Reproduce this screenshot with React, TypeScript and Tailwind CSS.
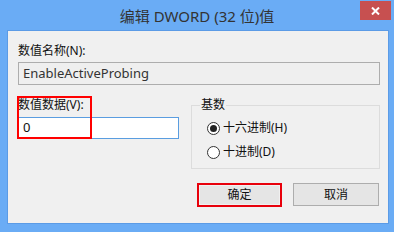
import React from 'react';

const font = { fontFamily: '"Noto Sans", "Noto Sans CJK SC", sans-serif' };

const Radio = ({ checked, label }: { checked?: boolean; label: string }) => (
  <div className="flex items-center h-[16px]">
    <span className="w-[13px] h-[13px] rounded-full border border-[#333] bg-white flex items-center justify-center">
      {checked && <span className="w-[7px] h-[7px] rounded-full bg-[#222]" />}
    </span>
    <span className="ml-[3px] text-[12px] leading-[16px] text-[#111]">{label}</span>
  </div>
);

export default function App() {
  return (
    <div
      className="w-[394px] h-[232px] bg-[#6aacf5] flex flex-col overflow-hidden"
      style={font}
    >
      {/* Title bar */}
      <div className="relative h-[30px] flex items-center justify-center">
        <span className="text-[15px] leading-[20px] text-[#333] pt-[1px]">编辑 DWORD (32 位)值</span>
        <div className="absolute right-[3px] top-[1px] w-[31px] h-[19px] bg-[#c75050] flex items-center justify-center">
          <svg width="9" height="8" viewBox="0 0 9 8">
            <path d="M1 0.5 L8 7.5 M8 0.5 L1 7.5" stroke="white" strokeWidth="2" />
          </svg>
        </div>
      </div>

      {/* Body */}
      <div className="flex-1 ml-[7px] mr-[5px] mb-[8px] bg-[#f0f0f0] border border-[#5b9be6] pl-[10px] pr-[8px] pt-[12px] flex flex-col">
        <div className="text-[12px] leading-[16px] text-[#111]">数值名称(N):</div>
        <div className="mt-[3px] h-[23px] border border-[#adadad] bg-[#efefef] flex items-center pl-[4px] text-[13px] text-[#333]">
          EnableActiveProbing
        </div>

        <div className="mt-[12px] flex">
          <div className="relative w-[161px] flex flex-col">
            <div className="text-[12px] leading-[16px] text-[#111]">数值数据(V):</div>
            <div className="mt-[4px] h-[22px] border border-[#5a9de0] bg-white flex items-center pl-[4px] text-[13px] text-[#111]">
              0
            </div>
            <div className="absolute left-[-1px] top-[-1px] w-[75px] h-[43px] border-2 border-[#ff0000]" />
          </div>

          <fieldset className="ml-[12px] w-[189px] h-[72px] border border-[#dcdcdc] pl-[15px]">
            <legend className="ml-[-7px] px-[1px] text-[12px] leading-[16px] text-[#111]">基数</legend>
            <div className="mt-[7px] flex flex-col gap-[8px]">
              <Radio checked label="十六进制(H)" />
              <Radio label="十进制(D)" />
            </div>
          </fieldset>
        </div>

        <div className="mt-[14px] flex justify-end gap-[11px] pr-[1px]">
          <div className="w-[85px] h-[24px] border-2 border-[#e8000b] p-[1px]">
            <div className="w-full h-full bg-[#e5e5e5] flex items-center justify-center text-[12px] text-[#111]">确定</div>
          </div>
          <div className="w-[86px] h-[23px] border border-[#adadad] bg-[#e5e5e5] flex items-center justify-center text-[12px] text-[#111]">
            取消
          </div>
        </div>
      </div>
    </div>
  );
}
